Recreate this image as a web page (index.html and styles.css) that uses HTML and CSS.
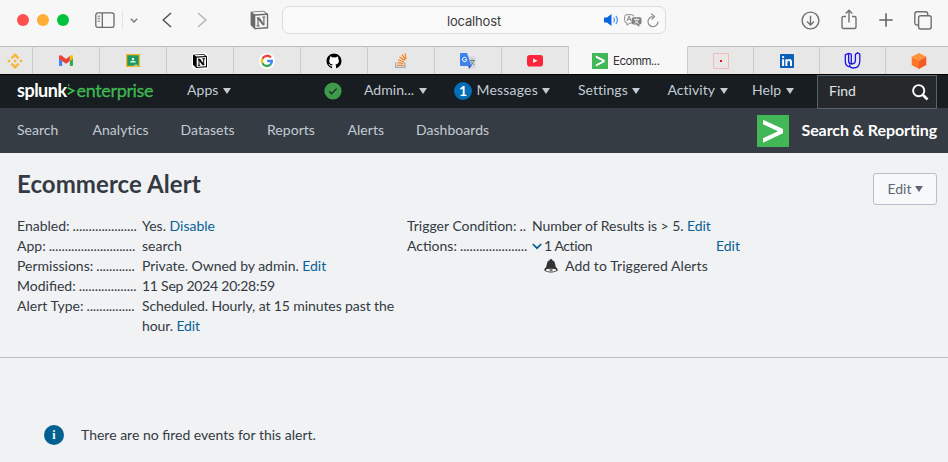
FILE: index.html
```
<!DOCTYPE html>
<html lang="en">
<head>
<meta charset="utf-8">
<title>Ecommerce Alert</title>
<link rel="stylesheet" href="styles.css">
</head>
<body>
<header class="toolbar">
  <div class="lights"><i class="light red"></i><i class="light amber"></i><i class="light green"></i></div>
  <svg class="ic sidebar" width="20" height="16" viewBox="0 0 20 16" fill="none" stroke="#6a6a6a" stroke-width="1.3"><rect x=".8" y=".8" width="18.2" height="14.6" rx="2.2"/><path d="M7.3 1v14"/><path d="M2.6 4.2h2.4M2.6 6.7h2.4M2.6 9.2h2.4" stroke-width="1"/></svg>
  <span class="divider"></span>
  <svg class="ic down" width="8" height="5" viewBox="0 0 8 5" fill="none" stroke="#777" stroke-width="1.4"><path d="M.8.7 4 3.9 7.2.7"/></svg>
  <svg class="ic back" width="10" height="16" viewBox="0 0 10 16" fill="none" stroke="#575757" stroke-width="1.5"><path d="M9 1 1.2 8 9 15"/></svg>
  <svg class="ic fwd" width="10" height="16" viewBox="0 0 10 16" fill="none" stroke="#b5b5b5" stroke-width="1.5"><path d="M1 1 8.8 8 1 15"/></svg>
  <svg class="ic notion" width="19" height="20" viewBox="0 0 19 20"><path d="M.6 1.8 13.8.7 18.2 4v14.4L4.500 19.300.6 15z" fill="#6b6b6b"/><path d="M2 2.400 13.400 1.600 16 3.400 4.600 4.200z" fill="#f7f7f7"/><path d="M5.300 5.700 16.900 4.900v12.200l-11.600.8z" fill="#f7f7f7"/><path d="M6.600 15.800h3M8 15.500V8M12.300 7h3.200M13.900 7.200v7.400" stroke="#6b6b6b" stroke-width="1.200"/><path d="M7 7.700h2.300l5 7.300h-1.400z" fill="#6b6b6b" stroke="#6b6b6b" stroke-width=".8"/></svg>
  <div class="address"><span class="host">localhost</span>
    <span class="address-icons">
    <svg width="15" height="12" viewBox="0 0 15 12"><path d="M0 3.500h3L7.500 0v12L3 8.500H0z" fill="#0a63e0"/><path d="M9.500 3.500q2 2.500 0 5M11.800 1.800q3.300 4.200 0 8.400" fill="none" stroke="#4d90ee" stroke-width="1.200"/></svg>
    <svg width="18" height="13" viewBox="0 0 18 13" fill="none"><path d="M8 9H6l-3 2.300V9Q.7 9 .7 6.600V2.800Q.7.7 2.800.7h5q2 0 2 1.700" stroke="#8b8b8b"/><path d="m3 7 2.100-5 2 5M3.700 5.300h2.800" stroke="#8b8b8b"/><path d="M9.600 3.200h6q2 0 2 2V8.600q0 2-2 2h-.3V13l-3-2.400H9.600q-2 0-2-2V5.200q0-2 2-2z" fill="#808080"/><path d="M9.800 5.400h5.600M12.500 4.300v1M10.500 9.500q3-1 3.500-4M11 6.200q1 2.500 3.800 3.300" stroke="#f7f7f7" stroke-width=".9"/></svg>
    <svg width="12" height="15" viewBox="0 0 12 15" fill="none" stroke="#8a8a8a" stroke-width="1.200"><path d="M5.800 3.600a5 5 0 1 0 5.200 5"/><path d="M4.400.8 7.500 3.700 4.600 6.600"/></svg>
    </span>
  </div>
  <div class="actions">
    <svg width="19" height="19" viewBox="0 0 19 19" fill="none" stroke="#707070" stroke-width="1.400"><circle cx="9.500" cy="9.500" r="8.400"/><path d="M9.500 4.700v9M6 10.500l3.500 3.400 3.500-3.400"/></svg>
    <svg class="share" width="16" height="21" viewBox="0 0 16 21" fill="none" stroke="#707070" stroke-width="1.400"><path d="M5 7.500H2.500Q1 7.500 1 9v9q0 1.500 1.500 1.500h11Q15 19.500 15 18V9q0-1.500-1.500-1.500H11M8 13.500V1.500M4.700 4.600 8 1.300l3.300 3.300"/></svg>
    <svg width="14" height="14" viewBox="0 0 14 14" stroke="#666" stroke-width="1.600"><path d="M7 .3v13.400M.3 7h13.400"/></svg>
    <svg width="18" height="19" viewBox="0 0 18 19" fill="none" stroke="#707070" stroke-width="1.400"><path d="M4 14h-.8Q.8 14 .8 11.800V3Q.8.8 3 .8h8.500q2.200 0 2.200 2.200v1.300"/><rect x="4.600" y="4.700" width="12.600" height="13.300" rx="2"/></svg>
  </div>
</header>

<nav class="tabs">
  <div class="tab first"><svg width="16" height="16" viewBox="0 0 16 16" fill="#f8b63c"><path d="m8 0 4.500 4.500-1.800 1.800L8 3.600 5.300 6.300 3.500 4.500zM8 16l4.500-4.500-1.800-1.800L8 12.400 5.300 9.700l-1.800 1.800zM2 6.200 3.800 8 2 9.800.2 8zM14 6.200 15.800 8 14 9.800 12.200 8zM8 6.200 9.800 8 8 9.800 6.200 8z"/></svg></div>
  <div class="tab"><svg width="14" height="11" viewBox="0 0 14 11"><path d="M0 1.500 3.200 4v7H1Q0 11 0 10z" fill="#4285f4"/><path d="M14 1.500 10.800 4v7H13q1 0 1-1z" fill="#34a853"/><path d="M10.800 1 12 .2q2-.5 2 1.500v2l-3.200 2.400z" fill="#fbbc04"/><path d="M0 1.700Q0-.4 2.200.3L7 3.900 10.800 1v5L7 8.700 0 3.700z" fill="#ea4335"/></svg></div>
  <div class="tab"><svg width="14" height="13" viewBox="0 0 14 13"><path d="M0 0h14v13H0z" fill="#f3b52c"/><path d="M1.300 1.300h11.400v10.400H1.300z" fill="#189960"/><circle cx="7" cy="5" r="1.200" fill="#fff"/><path d="M4 8.500q0-1.800 3-1.800t3 1.800zM8.500 10.800h3v1h-3z" fill="#e7f5ec"/></svg></div>
  <div class="tab"><svg width="16" height="16" viewBox="0 0 16 16"><rect width="16" height="16" rx="3" fill="#fff"/><path d="m1 1.800 10.800-.7L15 3.500v10.800L4.200 15 1 11.800z" fill="#000"/><path d="m2.300 2.300 9.200-.6 1.700 1.200-9 .6zM4.700 4.700l9.300-.6v9.200l-9.300.6z" fill="#fff"/><path d="M5.800 12.400h2.500M7 12V6M10.300 5.700h2.900M11.700 5.800v6" stroke="#000"/><path d="M6 6h2l4.200 6h-1.600z" stroke="#000" stroke-width=".6"/></svg></div>
  <div class="tab"><svg width="16" height="16" viewBox="0 0 16 16" fill="none" stroke-width="2.300"><circle cx="8" cy="8" r="8" fill="#fff"/><path d="M11.900 4.500A5 5 0 0 0 3.500 5.800" stroke="#ea4335"/><path d="M3.500 5.800a5 5 0 0 0 0 4.400" stroke="#fbbc04"/><path d="M3.500 10.200a5 5 0 0 0 7.900 1.400" stroke="#34a853"/><path d="M11.400 11.600A5 5 0 0 0 12.900 8H8.200" stroke="#4285f4"/></svg></div>
  <div class="tab"><svg width="16" height="16" viewBox="0 0 16 16"><circle cx="8" cy="8" r="8" fill="#fff"/><path transform="translate(.5 .5) scale(.94)" d="M8 0C3.580 0 0 3.580 0 8c0 3.540 2.290 6.530 5.470 7.590.4.070.55-.17.55-.38v-1.490c-2.010.37-2.530-.49-2.690-.94-.09-.23-.48-.94-.82-1.130-.28-.15-.68-.52-.01-.53.63-.01 1.080.58 1.230.82.72 1.210 1.870.87 2.330.66.07-.52.28-.87.51-1.070-1.780-.2-3.640-.89-3.640-3.950 0-.87.31-1.590.82-2.150-.08-.2-.36-1.020.08-2.120 0 0 .67-.21 2.200.82a7.600 7.600 0 0 1 4 0c1.530-1.040 2.200-.82 2.200-.82.44 1.100.16 1.920.08 2.120.51.56.82 1.270.82 2.150 0 3.070-1.870 3.750-3.650 3.950.29.25.54.73.54 1.480v2.200c0 .21.15.46.55.38A8 8 0 0 0 16 8c0-4.420-3.580-8-8-8z"/></svg></div>
  <div class="tab"><svg width="14" height="15" viewBox="0 0 14 15" fill="none"><path d="M1.700 9.500v4.800h9.200V9.500" stroke="#aaa" stroke-width="1.300"/><path d="M3.200 12.300h6.300M3.300 9.600l6.200.7M4 6.800l5.800 2M5.500 4l5.100 3.500M8 1.600l3.400 5M11 .3l1.100 5.800" stroke="#f48024" stroke-width="1.200"/></svg></div>
  <div class="tab"><svg width="16" height="16" viewBox="0 0 16 16" fill="none"><path d="M6 3.500h9.500v12H9z" fill="#d4d7dc"/><path d="M8 12h4l-3 4z" fill="#2452bd"/><path d="M1 0h6l4.500 13H1q-1 0-1-1V1q0-1 1-1z" fill="#3e82ed"/><path d="M6.500 5.200a2.200 2.200 0 1 0 .4 1.500H4.800" stroke="#fff"/><path d="M10 7.500h5M12 6.300v1.200M10.800 12q2.700-1.500 3-4.500M11 8.500q1 2.500 3.500 3.500" stroke="#667b85" stroke-width=".9"/></svg></div>
  <div class="tab"><svg width="16" height="12" viewBox="0 0 16 12"><rect width="16" height="11.500" rx="2.800" fill="#fc2539"/><path d="M6.200 3.500v4.600l4.200-2.300z" fill="#fff"/></svg></div>
  <div class="tab active"><svg width="16" height="16" viewBox="0 0 16 16"><path d="M0 0h16v16H0z" fill="#42b757"/><path d="M3.800 2.500 12.700 7v2l-8.900 4.600v-2.200L10.400 8 3.800 4.700z" fill="#fff"/></svg><span>Ecomm...</span></div>
  <div class="tab late"><svg width="16" height="16" viewBox="0 0 16 16"><path d="M.5.5h15v15H.5z" fill="#ebe6e6" stroke="#f0bcbc"/><path d="M7 7h2v2H7z" fill="#f01414"/></svg></div>
  <div class="tab late"><svg width="14" height="14" viewBox="0 0 14 14"><rect width="14" height="14" rx=".8" fill="#0a62b8"/><path d="M2.100 5.200h2v6.700h-2zM5.400 5.200h1.900v.9q.7-1.100 2.100-1.100 2.600 0 2.600 3v3.900h-2V8.400q0-1.600-1.200-1.600-1.400 0-1.400 1.700v3.400h-2z" fill="#fff"/><circle cx="3.100" cy="3.100" r="1.150" fill="#fff"/></svg></div>
  <div class="tab late"><svg width="17" height="17" viewBox="0 0 17 17" fill="none" stroke="#1a12e8" stroke-width="1.300"><path d="M4.600 1.400 1.300 2.900v6.300q0 4.800 4.300 5.600M4.600 1.400v7.400q0 3.200 3 3.200 3.800 0 3.800-3.400V2.400l2.200-1.600 2.200 1.300v6.600q0 7.300-6.900 7.300-3.300 0-3.300-3.400M7.300 11.900V2.200L4.600 1.400"/></svg></div>
  <div class="tab late"><svg width="16" height="16" viewBox="0 0 16 16"><path d="m8 0 7.300 3.800L8 7.800.7 3.800z" fill="#ff9238"/><path d="M.7 3.800 8 7.800V16L.7 12z" fill="#ff7628"/><path d="M15.300 3.800 8 7.800V16l7.300-4z" fill="#f25c22"/></svg></div>
</nav>

<div class="splunkbar">
  <div class="logo"><b>splunk</b><svg width="9" height="12" viewBox="0 0 9 12" fill="none" stroke="#3fb950" stroke-width="1.700"><path d="M.7 3.700 6.800 6.700 .7 10.300"/><path d="M1.700.3v1.800" stroke-width="1.300"/></svg><span>enterprise</span></div>
  <div class="menu m-apps"><span>Apps</span><i class="caret"></i></div>
  <svg class="health" width="18" height="18" viewBox="0 0 18 18"><circle cx="9" cy="9" r="8.600" fill="#3f9b4b"/><path d="m5.200 9.300 2.500 2.500 5-5.200" fill="none" stroke="#1a2e20" stroke-width="1.300"/></svg>
  <div class="menu m-admin"><span>Admin...</span><i class="caret"></i></div>
  <div class="menu m-msg"><b class="count">1</b><span>Messages</span><i class="caret"></i></div>
  <div class="menu m-settings"><span>Settings</span><i class="caret"></i></div>
  <div class="menu m-activity"><span>Activity</span><i class="caret"></i></div>
  <div class="menu m-help"><span>Help</span><i class="caret"></i></div>
  <div class="find"><span>Find</span><svg width="17" height="17" viewBox="0 0 17 17" fill="none" stroke="#fff"><circle cx="6.700" cy="6.700" r="5.600" stroke-width="1.900"/><path d="m11 11 4.500 4.500" stroke-width="2.700"/></svg></div>
</div>

<nav class="appbar">
  <a class="n-search">Search</a><a class="n-analytics">Analytics</a><a class="n-datasets">Datasets</a><a class="n-reports">Reports</a><a class="n-alerts">Alerts</a><a class="n-dash">Dashboards</a>
  <div class="app"><svg width="32" height="32" viewBox="0 0 32 32"><path d="M0 0h32v32H0z" fill="#42b757"/><path d="M6 4.800 26 14v4.300L6 27.700v-4.500l15-7L6 9.300z" fill="#fff"/></svg><b>Search &amp; Reporting</b></div>
</nav>

<main>
  <div class="heading"><h1>Ecommerce Alert</h1><button class="edit"><span>Edit</span><i class="caret"></i></button></div>
  <section class="details">
    <dl class="left">
      <dt><span>Enabled:</span><i class="dots">....................</i></dt><dd>Yes. <a>Disable</a></dd>
      <dt><span>App:</span><i class="dots">...........................</i></dt><dd>search</dd>
      <dt><span>Permissions:</span><i class="dots">............</i></dt><dd class="snug">Private. Owned by admin. <a>Edit</a></dd>
      <dt><span>Modified:</span><i class="dots">..................</i></dt><dd class="date">11 Sep 2024 20:28:59</dd>
      <dt><span>Alert Type:</span><i class="dots">...............</i></dt><dd class="schedule">Scheduled. Hourly, at 15 minutes past the<br>hour. <a>Edit</a></dd>
    </dl>
    <dl class="right">
      <dt><span>Trigger Condition:</span><i class="dots">..</i></dt><dd class="condition">Number of Results is &gt; 5. <a>Edit</a></dd>
      <dt><span>Actions:</span><i class="dots">.....................</i></dt>
      <dd>
        <div class="action-row"><svg width="10" height="7" viewBox="0 0 10 7" fill="none" stroke="#00608f" stroke-width="1.700"><path d="M.8 1 5 5.200 9.200 1"/></svg><span>1 Action</span><a>Edit</a></div>
        <div class="alert-row"><svg width="14" height="14" viewBox="0 0 14 14"><path d="M7 0q1.200 0 1.200 1Q11 2 11.200 5.200q.1 3.300 2.300 4.800.9 1.500-1.500 2.500-2 1-5 1t-5-1Q-.4 11.500.5 10q2.200-1.500 2.300-4.800Q3 2 5.800 1q0-1 1.200-1z" fill="#333"/><ellipse cx="7" cy="11.200" rx="5.200" ry="1.400" fill="#f0f2f4"/><path d="M5 11q2-1.500 4 0-1.500 1.500-4 0z" fill="#333"/></svg><span>Add to Triggered Alerts</span></div>
      </dd>
    </dl>
  </section>
  <div class="empty"><span class="info">i</span><span class="message">There are no fired events for this alert.</span></div>
</main>
</body>
</html>
```
FILE: styles.css
```
* { box-sizing: border-box; }
body { margin: 0; width: 948px; height: 462px; overflow: hidden; background: #f0f2f4; color: #343a43; font: 14px/20px Lato, "Open Sans", sans-serif; }
svg { display: block; flex: none; }
i { font-style: normal; }

.toolbar { height: 46px; background: #f7f7f7; display: flex; align-items: center; padding: 0 16px 6px 17px; }
.lights { display: flex; gap: 8px; }
.light { width: 12px; height: 12px; border-radius: 50%; }
.red { background: #fe4f4f; }
.amber { background: #fdae33; }
.green { background: #04c23e; }
.sidebar { margin-left: 26px; }
.divider { width: 1px; height: 18px; background: #e2e2e2; margin-left: 7px; }
.down { margin-left: 7px; }
.back { margin-left: 24px; }
.fwd { margin-left: 25px; }
.notion { margin-left: 43px; }
.address { position: relative; width: 384px; height: 28px; border: 1px solid #dcdcdc; border-radius: 7px; margin-left: 13px; display: flex; align-items: center; justify-content: center; background: #f9f9f9; }
.host { font: 13px/20px Inter, sans-serif; letter-spacing: -.15px; color: #3d3d3d; padding-top: 1px; }
.address-icons { position: absolute; right: 6px; display: flex; gap: 5px; align-items: center; }
.actions { flex: 1; display: flex; justify-content: flex-end; align-items: center; gap: 21.500px; }
.share { margin-top: -2px; }

.tabs { height: 28px; display: flex; background: #e7e7e7; }
.tab { width: 67px; border-right: 1px solid #cbcbcb; border-top: 1px solid #bcbcbc; display: flex; align-items: center; justify-content: center; }
.first { width: 33px; padding-right: 3px; }
.late { width: 66px; }
.late:last-child { flex: 1; border-right: 0; padding-left: 4px; }
.active { width: 119px; background: #f7f7f7; border-top-color: #f7f7f7; gap: 5px; font: 11.500px/16px Inter, sans-serif; letter-spacing: -.5px; color: #333; justify-content: flex-start; padding-left: 23px; }

.splunkbar { height: 34px; background: #171d21; border-top: 1px solid #000; display: flex; align-items: center; color: #c3cbd4; padding: 0 11px 0 17px; }
.logo { display: flex; align-items: center; font-size: 18px; width: 170px; padding-bottom: 3px; }
.logo b { color: #fff; letter-spacing: -.5px; }
.logo svg { margin-right: 1px; }
.logo span { color: #3fb950; letter-spacing: -.35px; -webkit-text-stroke: .3px #3fb950; }
.menu { display: flex; align-items: center; }
.menu span { margin-top: -3px; letter-spacing: .04px; }
.menu .caret { margin-top: -2px; }
.health { margin-top: -1px; }
.caret { width: 0; border: 4px solid transparent; border-top: 6px solid currentColor; border-bottom: 0; margin-left: 4.500px; }
.m-apps { width: 137px; }
.m-admin { width: 90px; margin-left: 22px; }
.m-msg { width: 124px; }
.m-msg span { letter-spacing: .2px; }
.m-settings { width: 89.500px; }
.m-activity { width: 84.500px; }
.m-help { flex: 1; }
.count { width: 18px; height: 18px; border-radius: 50%; background: #006eb8; color: #fff; text-align: center; line-height: 17px; margin: -2px 4.500px 0 0; }
.find { width: 120px; height: 34px; border: 1px solid #58646f; background: #25292c; color: #e1e4e8; display: flex; align-items: center; justify-content: space-between; padding: 0 7px 0 11px; }
.find span { margin-top: -2px; }
.find svg { margin-top: 1px; }

.appbar { height: 45px; background: #363c44; color: #c3cbd4; display: flex; align-items: center; padding: 0 11px 0 17px; }
.appbar > a { margin-top: -2px; letter-spacing: .04px; }
.n-search { width: 75.500px; }
.n-analytics { width: 88px; }
.n-datasets { width: 86.500px; }
.n-reports { width: 80.500px; }
.n-alerts { width: 68.500px; }
.app { display: flex; align-items: center; gap: 12.500px; margin-left: auto; color: #fff; font-size: 16px; letter-spacing: -.1px; }
.app b { margin-top: -2px; }

.heading { height: 63px; display: flex; justify-content: space-between; padding: 16px 11px 0 17px; }
h1 { margin: 0; font-size: 24px; line-height: 30px; letter-spacing: .08px; }
.edit { width: 64px; height: 32px; margin-top: 4px; border: 1px solid #b7bfcc; border-radius: 3px; background: #f7f8fa; color: #5c6773; font: 14px Lato, sans-serif; display: flex; align-items: center; justify-content: center; padding: 0; }
.edit span { margin-top: -2px; }
.edit .caret { margin: -1px 0 0 3px; }
.details { display: flex; height: 142px; border-bottom: 1px solid #b8becb; padding-left: 17px; }
dl { margin: 0; display: grid; grid-template-columns: 121px 1fr; column-gap: 4px; align-content: start; }
.left { width: 390px; }
.right { width: 333px; }
dt { display: flex; height: 20px; gap: 3px; white-space: nowrap; }
dd { margin: 0; white-space: nowrap; }
.dots { letter-spacing: -.1px; }
a { color: inherit; }
dd a { color: #0a6196; }
.snug { letter-spacing: -.04px; }
.date { letter-spacing: -.25px; }
.schedule { letter-spacing: -.1px; }
.condition { letter-spacing: -.07px; }
.action-row { display: flex; align-items: center; gap: 2px; }
.action-row span { letter-spacing: -.4px; }
.action-row a { margin-left: auto; }
.alert-row { display: flex; align-items: center; padding-left: 12px; gap: 7px; letter-spacing: .07px; }
.empty { display: flex; align-items: center; padding: 67px 0 0 44px; gap: 17px; }
.info { width: 20px; height: 20px; border-radius: 50%; background: #00608f; color: #fff; text-align: center; font: bold 12px/20px "Liberation Serif", serif; }
```
